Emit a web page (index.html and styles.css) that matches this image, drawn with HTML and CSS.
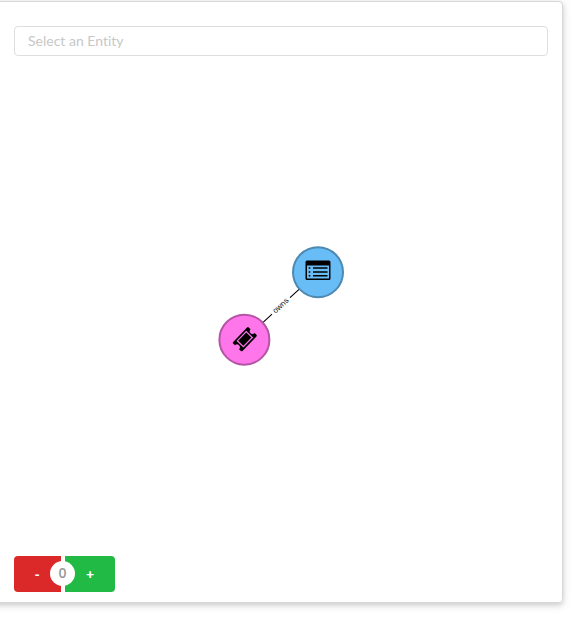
FILE: index.html
```html
<!DOCTYPE html>
<html lang="en">
<head>
<meta charset="utf-8">
<title>Entity graph</title>
<link rel="stylesheet" href="styles.css">
</head>
<body>
<main class="segment">
  <input class="search" type="text" placeholder="Select an Entity">
  <svg class="graph" viewBox="0 56 547 500" width="547" height="500">
    <path class="edge" d="M262.8 322.6L272 314.1M290 297.7L299 289.4"/>
    <text class="edge-label" transform="translate(281 306) rotate(-42.5)" y="2">owns</text>
    <circle class="node node-site" cx="318" cy="272.2" r="25"/>
    <g transform="translate(305 260)">
      <path fill-rule="evenodd" d="M2 .5H24Q25.5 .5 25.5 2V18.5Q25.5 20 24 20H2Q.5 20 .5 18.5V2Q.5 .5 2 .5ZM2 5.5V18.5H24V5.5Z"/>
      <path d="M3.7 7.2H5.3V8.7H3.7ZM8 7.2H22.5V8.7H8ZM3.7 11.2H5.3V12.7H3.7ZM8 11.2H22.5V12.7H8ZM3.7 15H5.3V16.5H3.7ZM8 15H22.5V16.5H8Z"/>
    </g>
    <circle class="node node-ticket" cx="244.4" cy="339.7" r="25"/>
    <g transform="translate(244.8 339.2) rotate(-46)">
      <path d="M-10 -6.5H10Q11.2 -6.5 11.2 -5.3V-2.8A2.8 2.8 0 0 0 11.2 2.8V5.3Q11.2 6.5 10 6.5H-10Q-11.2 6.5 -11.2 5.3V2.8A2.8 2.8 0 0 0 -11.2 -2.8V-5.3Q-11.2 -6.5 -10 -6.5Z"/>
      <rect class="ticket-line" x="-6.4" y="-4.2" width="12.8" height="8.4"/>
    </g>
  </svg>
  <div class="buttons">
    <button class="button minus">-</button>
    <span class="count">0</span>
    <button class="button plus">+</button>
  </div>
</main>
</body>
</html>
```
FILE: styles.css
```css
* { box-sizing: border-box; }
html { height: 100%; overflow: hidden; }
body {
  display: flow-root;
  min-height: 100vh;
  margin: 0;
  background: #fff;
  font-family: Lato, sans-serif;
  font-size: 14px;
}
.segment {
  width: 573px;
  height: 602px;
  margin: 1px 0 0 -10px;
  padding: 24px 14px 0 23px;
  border: 1px solid #d8d8d9;
  border-radius: 4px;
  box-shadow: 0 2px 4px rgba(34, 36, 38, .12), 0 2px 10px rgba(34, 36, 38, .15);
}
.search {
  display: block;
  width: 534px;
  height: 30px;
  padding: 0 13px 2px;
  border: 1px solid #dededf;
  border-radius: 4px;
  font: inherit;
  font-variant-ligatures: none;
  outline: 0;
}
.search::placeholder { color: #c7c7c7; opacity: 1; }
.graph { display: block; margin-left: -14px; }
.edge { stroke: #000; stroke-width: 1.1; fill: none; }
.edge-label {
  font-family: "Liberation Sans", sans-serif;
  font-size: 8px;
  text-anchor: middle;
  fill: #222;
}
.node { stroke-width: 2; }
.node-site { fill: #68bdf6; stroke: #4d89b0; }
.node-ticket { fill: #ff75ea; stroke: #b355a4; }
.ticket-line { fill: none; stroke: #ff75ea; stroke-width: 1.2; }
.buttons { position: relative; display: flex; gap: 4px; width: 101px; }
.button {
  height: 36px;
  padding: 0 0 2px;
  border: 0;
  color: #fff;
  font: 900 14px Lato, sans-serif;
}
.minus { width: 47px; padding-right: 1px; background: #db2828; border-radius: 4px 0 0 4px; }
.plus { width: 50px; background: #21ba45; border-radius: 0 4px 4px 0; }
.count {
  position: absolute;
  left: 36px;
  top: 5px;
  width: 25px;
  height: 25px;
  border-radius: 50%;
  background: #fff;
  color: #999;
  font: 600 14px/24px "Open Sans", sans-serif;
  text-align: center;
}
```
